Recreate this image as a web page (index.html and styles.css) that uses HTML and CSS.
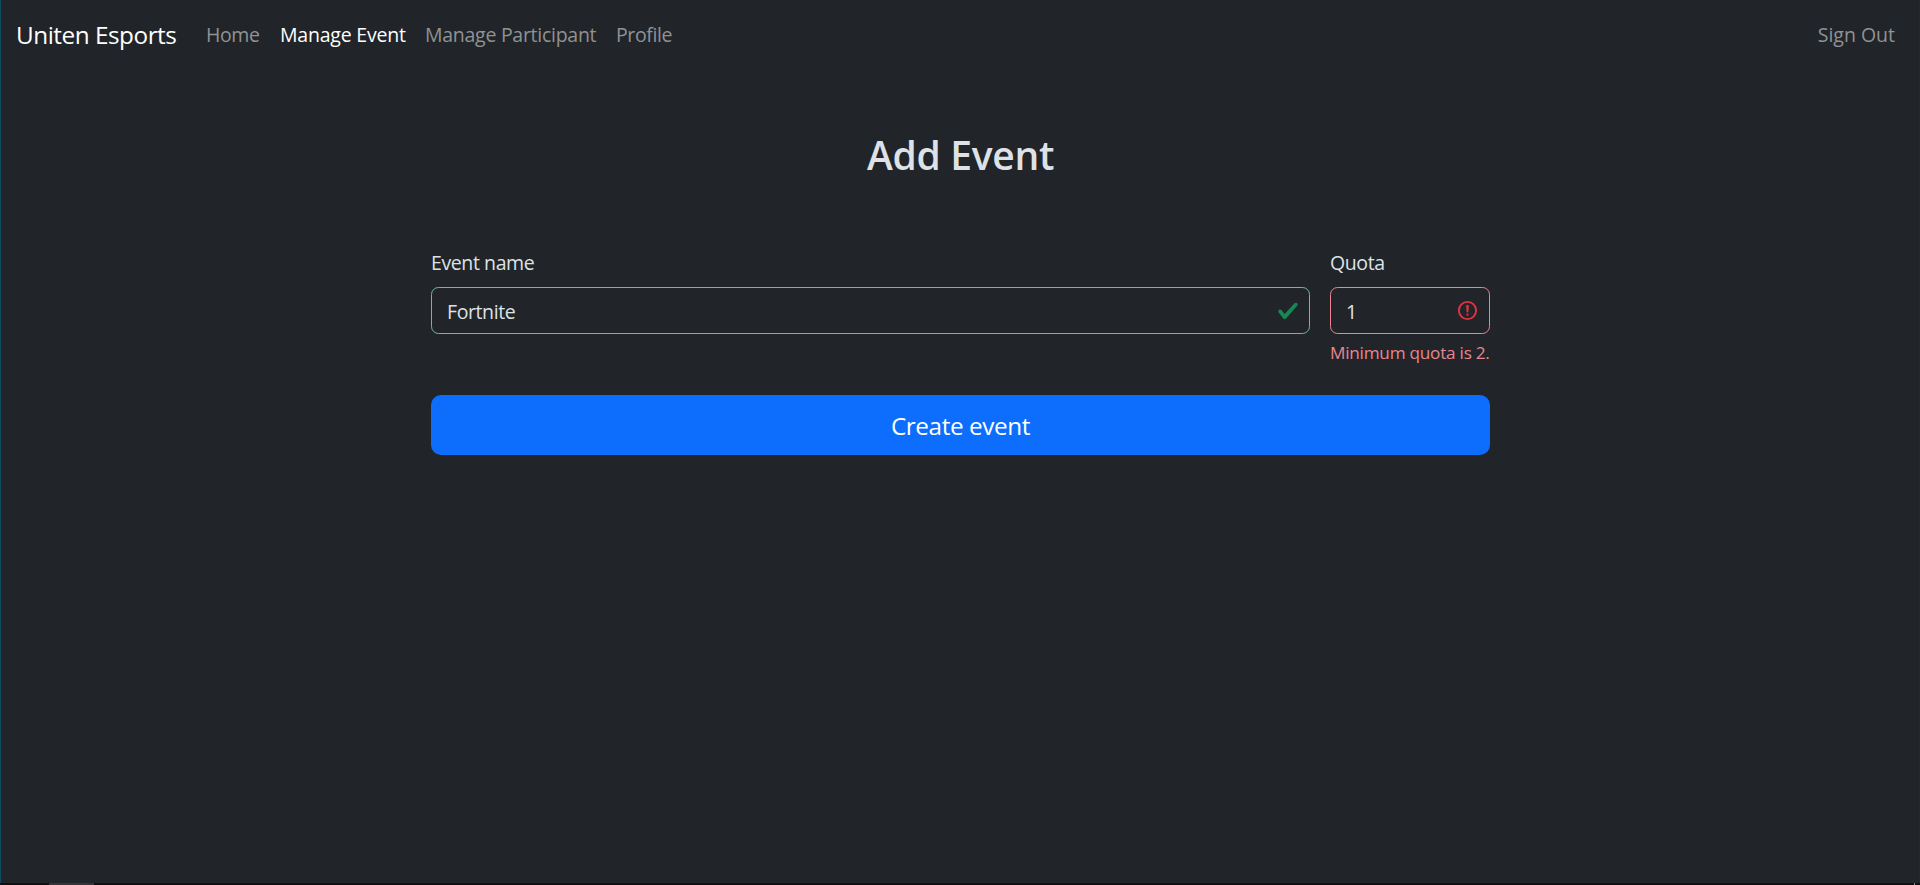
FILE: index.html
```html
<!DOCTYPE html>
<html lang="en">
<head>
<meta charset="utf-8">
<title>Add Event</title>
<link rel="stylesheet" href="styles.css">
</head>
<body>
<div class="page">
  <nav class="navbar">
    <a class="brand">Uniten Esports</a>
    <a class="nav-link nav-home">Home</a>
    <a class="nav-link nav-event active">Manage Event</a>
    <a class="nav-link nav-participant">Manage Participant</a>
    <a class="nav-link nav-profile">Profile</a>
    <a class="nav-link nav-signout">Sign Out</a>
  </nav>
  <main class="container">
    <h1 class="title">Add Event</h1>
    <form class="form">
      <div class="row">
        <div class="field">
          <label class="label" for="name">Event name</label>
          <div class="control valid">
            <input class="input" id="name" type="text" value="Fortnite">
            <svg class="icon icon-check" viewBox="0 0 8 8"><path fill="#198754" d="M2.3 6.73.6 4.53c-.4-1.04.46-1.4 1.1-.8l1.1 1.4 3.4-3.8c.6-.63 1.6-.27 1.2.7l-4 4.6c-.43.5-.8.4-1.1.1z"/></svg>
          </div>
        </div>
        <div class="field">
          <label class="label" for="quota">Quota</label>
          <div class="control invalid">
            <input class="input" id="quota" type="text" value="1">
            <svg class="icon" viewBox="0 0 12 12" fill="none" stroke="#dc3545"><circle cx="6" cy="6" r="4.5"/><path stroke-linejoin="round" d="M5.8 3.6h.4L6 6.5z"/><circle cx="6" cy="8.2" r=".6" fill="#dc3545" stroke="none"/></svg>
          </div>
          <div class="feedback">Minimum quota is 2.</div>
        </div>
      </div>
      <button class="submit" type="button">Create event</button>
    </form>
  </main>
  <footer class="strip"><div class="strip-tab"></div><div class="strip-mark"></div></footer>
</div>
</body>
</html>
```
FILE: styles.css
```css
* { box-sizing: border-box; }
body {
  margin: 0;
  background: #212529;
  color: #dee2e6;
  font-family: "Open Sans", "Noto Sans", sans-serif;
  font-size: 19.5px;
  line-height: 30px;
  overflow: hidden;
}
.page {
  height: 885px;
  display: flex;
  flex-direction: column;
}
.navbar {
  display: flex;
  align-items: center;
  height: 70px;
  padding: 0 24px 0 15px;
  border-left: 1px solid #0f4c64;
  border-right: 1px solid #1d2740;
  white-space: nowrap;
}
.brand {
  width: 190px;
  color: #fff;
  font-size: 24.3px;
  letter-spacing: -0.47px;
}
.nav-link { color: #909294; letter-spacing: -0.4px; }
.nav-link.active { color: #fff; }
.nav-home { width: 74px; }
.nav-event { width: 145px; letter-spacing: -0.2px; }
.nav-participant { width: 191px; letter-spacing: -0.27px; }
.nav-signout { margin-left: auto; letter-spacing: 0; }
.container {
  flex: 1;
  display: flex;
  flex-direction: column;
  align-items: center;
  border-left: 1px solid #0f4c64;
  border-right: 1px solid #1d2740;
}
.title {
  margin: 61px 0 71px;
  padding-left: 1px;
  font-size: 39px;
  font-weight: 600;
  line-height: 48px;
  letter-spacing: -0.3px;
}
.form { width: 1060px; padding-left: 1px; }
.row {
  display: grid;
  grid-template-columns: 879px 160px;
  column-gap: 20px;
}
.label {
  display: block;
  height: 37px;
  line-height: 26px;
  letter-spacing: -0.4px;
}
.control {
  display: flex;
  align-items: center;
  height: 47px;
  padding: 0 10px 0 15px;
  border: 1px solid;
  border-radius: 7.5px;
}
.valid { border-color: #75b798; }
.invalid { border-color: #ea868f; }
.input {
  flex: 1;
  min-width: 0;
  height: 45px;
  padding: 2px 0 0;
  border: 0;
  outline: 0;
  background: transparent;
  color: #dee2e6;
  font: inherit;
  letter-spacing: -0.4px;
}
.icon { flex: none; width: 23px; height: 23px; }
.icon-check { width: 22px; height: 22px; }
.feedback {
  margin-top: 6px;
  height: 25px;
  color: #ea868f;
  font-size: 17.2px;
  line-height: 26px;
  white-space: nowrap;
  letter-spacing: -0.25px;
}
.submit {
  display: block;
  width: 100%;
  height: 60px;
  margin-top: 30px;
  padding: 1px 0 0;
  border: 0;
  border-radius: 10px;
  background: #0d6efd;
  color: #fff;
  font-family: inherit;
  font-size: 24.3px;
  line-height: 38px;
  letter-spacing: -0.4px;
}
.strip {
  display: flex;
  justify-content: space-between;
  height: 2px;
  padding: 0 5px 0 49px;
  background: #120f0f;
}
.strip-tab { width: 45px; background: #363434; }
.strip-mark { width: 1px; background: #8a8888; }
```
